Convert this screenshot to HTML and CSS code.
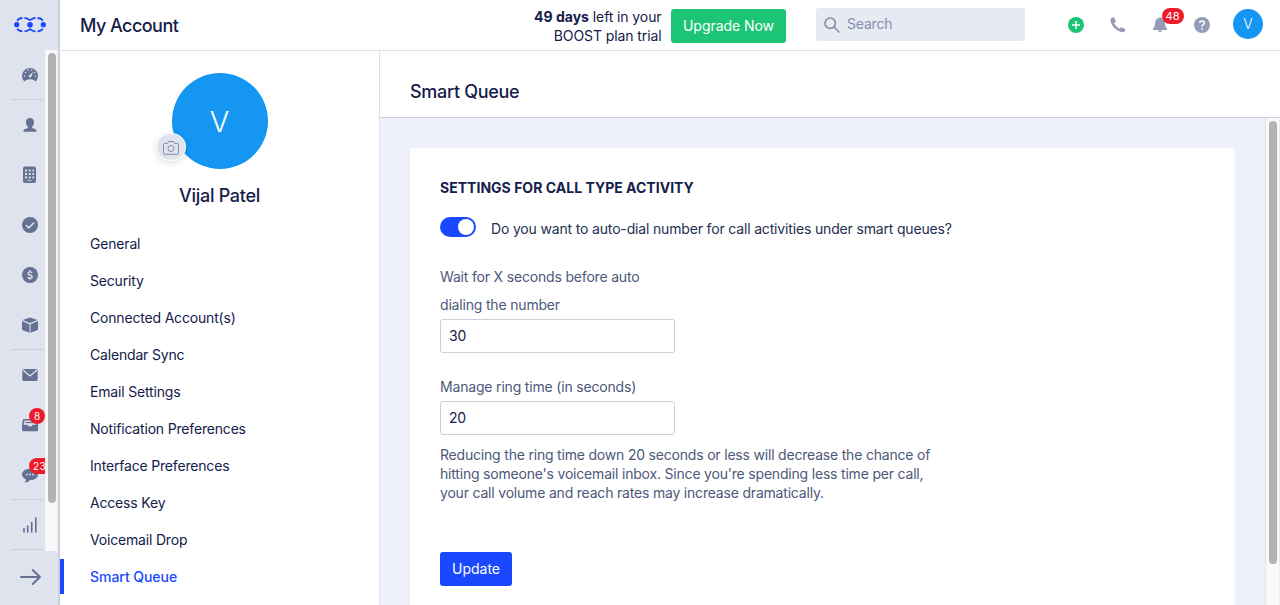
FILE: index.html
```html
<!DOCTYPE html>
<html lang="en">
<head>
<meta charset="utf-8">
<title>My Account</title>
<link rel="stylesheet" href="styles.css">
</head>
<body>
<div class="app">
  <aside class="rail">
    <div class="logo">
      <svg width="32" height="18" viewBox="0 0 32 18" fill="none" stroke="#1a48ff" stroke-width="1.800">
        <path d="M3.200 4.700Q5 2 8.500 2M10.500 2Q13 2 14.700 3.400M17.300 3.400Q19 2 21.500 2M23.500 2Q27 2 28.800 4.700M3.200 12.800Q5 15.300 8.500 15.300M10.500 15.300Q13 15.300 14.700 13.900M17.300 13.900Q19 15.300 21.500 15.300M23.500 15.300Q27 15.300 28.800 12.800M14.300 3.200 16 4 17.700 3.200M14.300 14.100 16 13.300 17.700 14.100"/>
        <g fill="#1a48ff" stroke="none"><circle cx="2.700" cy="8.700" r="2.600"/><circle cx="16" cy="8.700" r="2.800"/><circle cx="29.300" cy="8.700" r="2.600"/></g>
      </svg>
    </div>
    <div class="rail-scroll">
      <nav class="rail-nav">
        <a class="rail-item ruled"><svg width="16" height="16" viewBox="0 0 16 16"><path fill="#657092" d="M2.300 14.500A8 8 0 1 1 13.700 14.500L11.800 12.900Q8 11.400 4.200 12.900Z"/><g fill="#dfe3ee"><circle cx="2.600" cy="9" r=".8"/><circle cx="3.500" cy="5.500" r=".8"/><circle cx="6.100" cy="3" r=".8"/><circle cx="9.700" cy="3" r=".8"/><circle cx="12.600" cy="5.500" r=".8"/><circle cx="13.400" cy="9" r=".8"/><path d="M11.200 5 9.300 9.600A1.300 1.300 0 1 1 7.500 8.100Z"/></g></svg></a>
        <a class="rail-item"><svg width="16" height="16" viewBox="0 0 16 16" fill="#657092"><path d="M8 1C10.600 1 12 2.700 12 5.200C12 7.300 11.200 8.400 10.200 9.400V11L13.500 12.300Q14.600 12.800 14.600 14.700H1.400Q1.400 12.800 2.500 12.300L5.800 11V9.400C4.800 8.400 4 7.300 4 5.200C4 2.700 5.400 1 8 1Z"/></svg></a>
        <a class="rail-item"><svg width="16" height="18" viewBox="0 0 16 18"><rect x="1" y=".5" width="13" height="16.500" rx="2" fill="#657092"/><path stroke="#dfe3ee" stroke-width="2" stroke-dasharray="2 1.700" d="M3 4.500H12M3 8H12M3 11.500H12"/><path stroke="#c5cad9" d="M5.500 14.700H9.500"/></svg></a>
        <a class="rail-item"><svg width="16" height="16" viewBox="0 0 16 16"><circle cx="8" cy="8" r="8" fill="#657092"/><path fill="none" stroke="#dfe3ee" stroke-width="1.500" d="m4 8.200 2.800 2.700 5.300-5.500"/></svg></a>
        <a class="rail-item"><svg width="16" height="16" viewBox="0 0 16 16"><circle cx="8" cy="8" r="8" fill="#657092"/><path fill="none" stroke="#dfe3ee" stroke-width="1.400" d="M10.100 6.100Q9.800 4.900 8 4.900T6 6.400Q6 7.600 8 8T10.100 9.700Q10.100 11.200 8 11.200T5.800 9.900M8 3.300V5M8 11V12.700"/></svg></a>
        <a class="rail-item ruled"><svg width="16" height="16" viewBox="0 0 16 16" fill="#657092"><path d="M8 .4 15.400 3 8 6.100.6 3ZM0 4.100 7.500 7.200V15.700L.8 13.200Q0 12.900 0 12ZM16 4.100 8.500 7.200V15.700L15.200 13.200Q16 12.900 16 12Z"/></svg></a>
        <a class="rail-item"><svg width="16" height="16" viewBox="0 0 16 16"><rect x=".3" y="2" width="15.400" height="12" rx="1.500" fill="#657092"/><path fill="none" stroke="#dfe3ee" stroke-width="1.300" d="M1 3 8 9 15 3"/></svg></a>
        <a class="rail-item"><svg width="16" height="16" viewBox="0 0 16 16"><path fill="#657092" d="M2 2H14Q15 2 15.200 3L16 8V13Q16 14.300 14.700 14.300H1.300Q0 14.300 0 13V8L.8 3Q1 2 2 2Z"/><path fill="#dfe3ee" d="M2.500 3.500H13.500L14.300 7.800H10.600Q10 9.500 8 9.500T5.400 7.800H1.700Z"/><path stroke="#657092" stroke-width="1.200" d="M3.500 5.500H12.500"/></svg><span class="badge round">8</span></a>
        <a class="rail-item ruled"><svg width="16" height="16" viewBox="0 0 16 16"><path fill="#657092" d="M8 1.700C12.500 1.700 16 4.100 16 7.400S12.500 13 8.200 13Q6.200 15.500 2.600 15.600Q4 14 3.800 12.300C1.500 11.300 0 9.500 0 7.400 0 4.100 3.500 1.700 8 1.700Z"/><g fill="#dfe3ee"><circle cx="5" cy="7.500" r=".9"/><circle cx="8" cy="7.500" r=".9"/><circle cx="11" cy="7.500" r=".9"/></g></svg><span class="badge wide">23</span></a>
        <a class="rail-item ruled"><svg width="16" height="18" viewBox="0 0 16 18"><path fill="none" stroke="#657092" stroke-width="1.600" stroke-linecap="round" d="M2 12.500V16M5.700 10V16M9.700 6.500V16M13.800 2V16"/></svg></a>
      </nav>
      <div class="scrollbar"><div class="thumb rail-thumb"></div></div>
    </div>
    <div class="rail-foot"><svg width="22" height="18" viewBox="0 0 22 18" fill="none" stroke="#657092" stroke-width="1.900"><path stroke-linecap="round" stroke-linejoin="round" d="M1 9H20M12.700 2 20 9 12.700 16"/></svg></div>
  </aside>
  <div class="page">
    <header class="topbar">
      <h1 class="title">My Account</h1>
      <p class="trial"><b>49 days</b> left in your<br>BOOST plan trial</p>
      <button class="upgrade">Upgrade Now</button>
      <div class="search"><svg width="16" height="16" viewBox="0 0 16 16" fill="none" stroke="#858eaa" stroke-width="1.600"><circle cx="6.200" cy="6.200" r="5.200"/><path stroke-linecap="round" d="m10 10 5 5"/></svg><span>Search</span></div>
      <div class="actions">
        <svg width="16" height="16" viewBox="0 0 16 16"><circle cx="8" cy="8" r="8" fill="#1bc575"/><path stroke="#fff" stroke-width="1.500" d="M4 8H12M8 4V12"/></svg>
        <svg width="16" height="16" viewBox="0 0 16 16"><path fill="#949cb6" d="M1.300 1.200 3.300.3Q4 .2 4.300.8L5.700 4Q5.900 4.600 5.400 5L4.100 6.200Q5.800 9.600 9.400 11.700L10.900 10.500Q11.400 10.200 12 10.500L14.800 12Q15.500 12.500 15.200 13.200L14.400 14.700Q13.800 15.400 12.600 15.200C6.500 14.500.7 8.500.4 2.700Q.4 1.600 1.300 1.200Z"/></svg>
        <span class="bell"><svg width="16" height="16" viewBox="0 0 16 16" fill="#949cb6"><path d="M8 0Q9 0 9 1C12 1.600 13 4 13 7Q13 10.300 15 11.500V13H1V11.500Q3 10.300 3 7C3 4 4 1.600 7 1Q7 0 8 0ZM6 13.400H10Q9.800 15.300 8 15.300T6 13.400Z"/></svg><span class="badge count">48</span></span>
        <svg width="16" height="16" viewBox="0 0 16 16"><circle cx="8" cy="8" r="8" fill="#949cb6"/><path fill="none" stroke="#fff" stroke-width="1.600" d="M5.700 6Q5.700 4 8 4T10.300 6Q10.300 7 9.100 7.600T8 9.700M8 11V12.700"/></svg>
      </div>
      <div class="avatar small">V</div>
    </header>
    <div class="body">
      <aside class="profile">
        <div class="photo"><div class="avatar large">V</div><span class="camera"><svg width="16" height="14" viewBox="0 0 16 14" fill="none" stroke="#858eaa"><path stroke-linejoin="round" d="M1.500 2.500H4Q4.800 2.300 5.200 1Q5.300.5 6 .5H10Q10.700.5 10.800 1 11.200 2.300 12 2.500H14.500Q15.500 2.500 15.500 3.500V12.500Q15.500 13.300 14.700 13.300H1.300Q.5 13.300.5 12.500V3.500Q.5 2.500 1.500 2.500Z"/><circle cx="8" cy="7.500" r="3"/></svg></span></div>
        <h2 class="name">Vijal Patel</h2>
        <nav class="menu">
          <a>General</a><a>Security</a><a>Connected Account(s)</a><a>Calendar Sync</a><a>Email Settings</a><a>Notification Preferences</a><a>Interface Preferences</a><a>Access Key</a><a>Voicemail Drop</a><a class="active">Smart Queue</a>
        </nav>
      </aside>
      <main class="main">
        <h2 class="section-title">Smart Queue</h2>
        <div class="content">
          <div class="canvas">
            <section class="card">
              <h3>SETTINGS FOR CALL TYPE ACTIVITY</h3>
              <div class="toggle-row"><span class="toggle"><i></i></span><span class="question">Do you want to auto-dial number for call activities under smart queues?</span></div>
              <label class="label wait">Wait for X seconds before auto<br>dialing the number</label>
              <input class="field" value="30">
              <label class="label ring">Manage ring time (in seconds)</label>
              <input class="field" value="20">
              <p class="hint">Reducing the ring time down 20 seconds or less will decrease the chance of<br>hitting someone's voicemail inbox. Since you're spending less time per call,<br>your call volume and reach rates may increase dramatically.</p>
              <button class="update">Update</button>
            </section>
          </div>
          <div class="scrollbar"><div class="thumb main-thumb"></div></div>
        </div>
      </main>
    </div>
  </div>
</div>
</body>
</html>
```
FILE: styles.css
```css
* { box-sizing: border-box; }
body { margin: 0; height: 605px; overflow: hidden; font: 14px/19px Inter, "Liberation Sans", sans-serif; color: #14204a; background: #fff; }
h1, h2, h3, p { margin: 0; font-weight: 500; }
button { border: 0; border-radius: 3px; color: #fff; font: inherit; padding: 0; }
svg { display: block; flex: none; }
.app { display: flex; height: 605px; }
.rail { width: 60px; flex: none; background: #dfe3ee; border-right: 2px solid #cdd1dd; display: flex; flex-direction: column; }
.logo { height: 50px; padding: 16px 0 0 14px; }
.rail-scroll { display: flex; height: 501px; }
.rail-nav { width: 45px; flex: none; overflow: hidden; padding: 0 1px 0 11px; }
.rail-item { display: flex; align-items: center; height: 50px; padding-left: 11px; position: relative; border-bottom: 1px solid transparent; }
.ruled { border-color: #c9cfdf; }
.badge { position: absolute; background: #ee1b2a; color: #fff; height: 16px; border-radius: 8px; text-align: center; font-size: 10px; line-height: 16px; }
.round { width: 16px; left: 18px; top: 8px; }
.wide { width: 25px; left: 18px; top: 8px; padding-right: 4px; letter-spacing: .4px; }
.scrollbar { width: 15px; flex: none; background: #f9f9f9; border-left: 1px solid #e4e4e4; border-right: 1px solid #ececec; padding: 3px 0 0 3px; }
.rail .scrollbar { width: 13px; border-left-color: #f3f3f3; padding-left: 2px; }
.thumb { width: 8px; border-radius: 4px; background: #b3b3b3; }
.rail-thumb { height: 450px; }
.main-thumb { height: 443px; }
.rail-foot { padding: 17px 0 0 20px; }
.page { flex: 1; min-width: 0; }
.topbar { height: 51px; border-bottom: 1px solid #dce2ec; display: flex; align-items: flex-start; padding-left: 20px; }
.title { font-size: 18px; line-height: 22px; width: 420px; margin-top: 15px; letter-spacing: -.55px; }
.trial { width: 162px; text-align: right; margin-top: 7px; padding-right: .5px; font-weight: 400; letter-spacing: -.1px; }
.trial b { letter-spacing: 0; }
.upgrade { width: 115px; height: 34px; margin: 9px 30px 0 9px; background: #1bc575; letter-spacing: -.05px; padding-bottom: 1px; }
.search { width: 209px; height: 33px; margin-top: 8px; padding: 0 8px; border-radius: 3px; background: #e6eaf3; color: #858eaa; display: flex; align-items: center; gap: 7px; letter-spacing: -.2px; }
.search span { margin-top: -2px; }
.actions { display: flex; margin: 17px 0 0 42.5px; gap: 26px; width: 165.5px; }
.bell { position: relative; }
.count { width: 22px; left: 10px; top: -9px; font-size: 11px; }
.avatar { border-radius: 50%; background: #1596f3; color: #fff; text-align: center; }
.small { width: 30px; height: 30px; line-height: 30px; margin-top: 9px; font-weight: 300; }
.body { display: flex; height: 554px; }
.profile { width: 320px; flex: none; border-right: 1px solid #dce2ec; padding-top: 22px; }
.photo { width: 96px; margin: 0 auto; position: relative; }
.large { width: 96px; height: 96px; line-height: 97px; font-size: 29px; font-weight: 300; }
.camera { position: absolute; left: -16px; top: 60px; width: 30px; height: 28px; border: 1px solid #fff; border-radius: 50%; background: #dfe3ee; box-shadow: 0 2px 6px #0002; display: flex; align-items: center; justify-content: center; padding-top: 2px; }
.name { font-size: 18px; line-height: 22px; text-align: center; margin-top: 16px; letter-spacing: -.3px; }
.menu { margin-top: 19px; letter-spacing: -.18px; }
.menu a { display: block; height: 35px; line-height: 36px; margin-bottom: 2px; padding-left: 30px; }
.menu .active { color: #1a48ff; border-left: 4px solid #1a48ff; padding-left: 26px; font-weight: 500; letter-spacing: -.05px; }
.main { flex: 1; min-width: 0; }
.section-title { height: 67px; padding: 30px 0 0 30px; border-bottom: 1px solid #c9cee2; font-size: 18px; line-height: 22px; letter-spacing: -.3px; }
.content { display: flex; height: 487px; }
.canvas { flex: 1; padding: 30px 30px 0; background: #eef1fa; }
.card { height: 457px; background: #fff; border-radius: 3px 3px 0 0; padding: 30px 30px 0; display: flex; flex-direction: column; align-items: flex-start; }
.card > * { flex: none; }
.card h3 { font-size: 14px; line-height: 20px; font-weight: 700; letter-spacing: .02px; }
.toggle-row { display: flex; margin-top: 19px; height: 24px; gap: 15px; }
.toggle { width: 36px; height: 20px; background: #1a48ff; border-radius: 10px; padding: 2px; }
.toggle i { display: block; width: 16px; height: 16px; margin-left: 16px; border-radius: 50%; background: #fff; }
.question { line-height: 24px; color: #24304f; letter-spacing: -.165px; }
.label { color: #4d587a; line-height: 28px; letter-spacing: -.18px; }
.wait { margin-top: 22px; }
.ring { margin-top: 20px; }
.field { width: 235px; height: 34px; padding: 0 8px 1px; border: 1px solid #c7d1dd; border-radius: 3px; font: inherit; color: #14204a; letter-spacing: -.2px; }
.hint { margin-top: 10px; color: #4d587a; font-weight: 400; letter-spacing: -.195px; }
.update { width: 72px; height: 34px; margin-top: 50px; padding-bottom: 1px; background: #1a48ff; }
```
